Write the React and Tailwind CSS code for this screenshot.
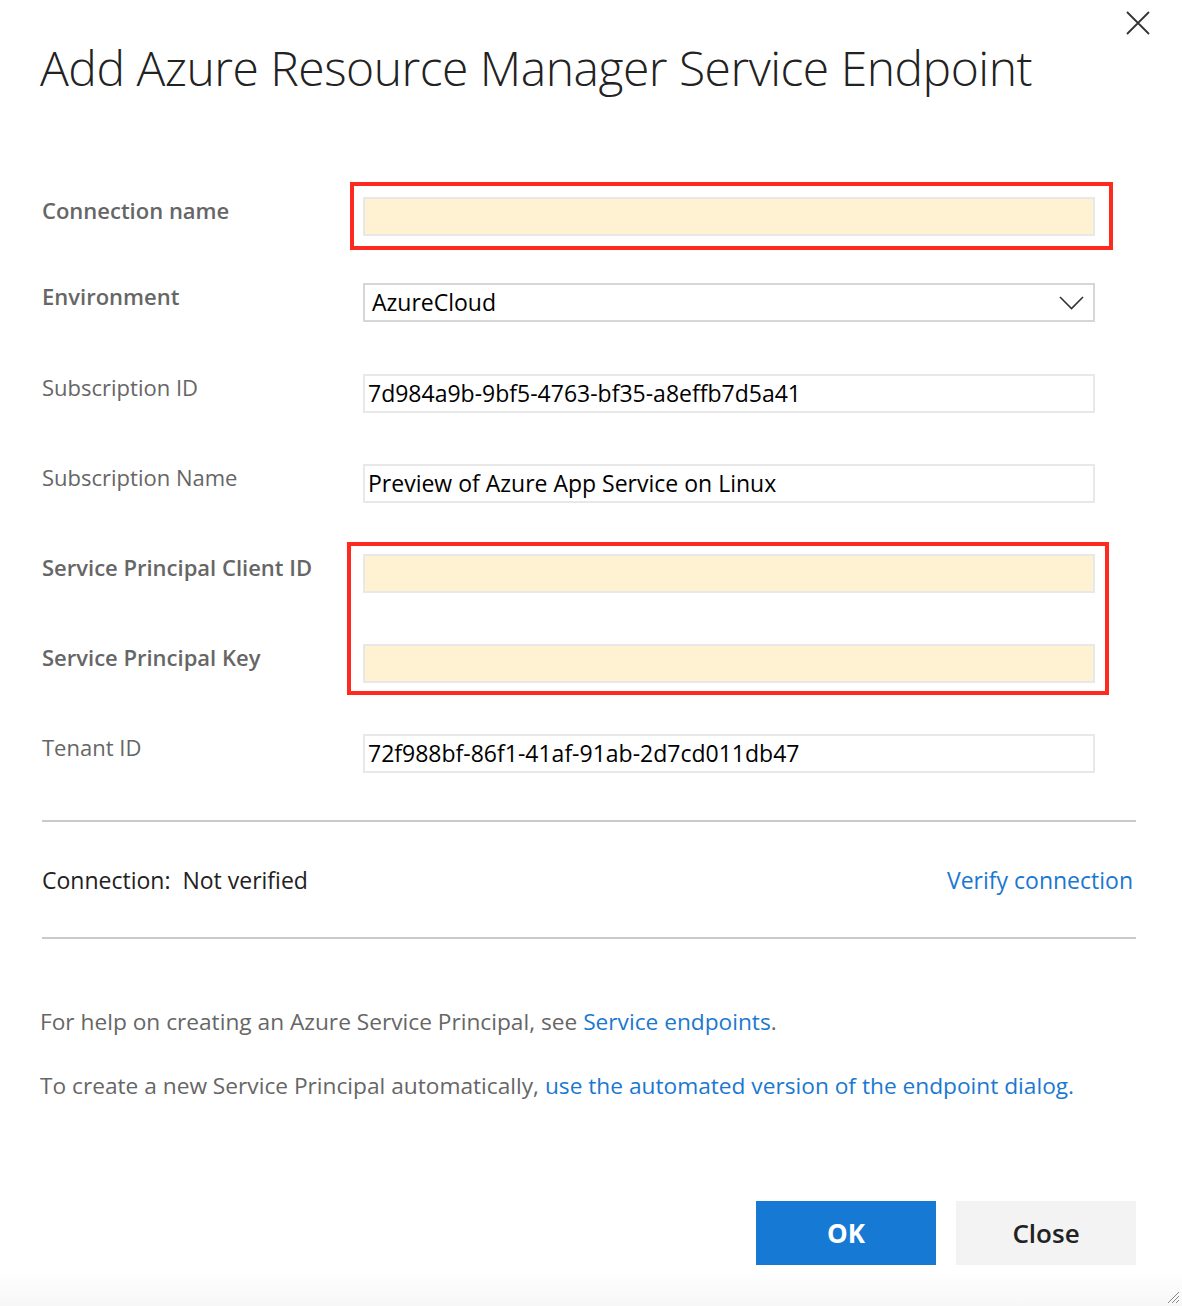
import React from 'react';

const font = { fontFamily: '"Open Sans", "Noto Sans", sans-serif' };

const fields = [
  { label: 'Connection name', bold: true, value: '', empty: true, mt: '' },
  { label: 'Environment', bold: true, value: 'AzureCloud', select: true, mt: 'mt-[47px]' },
  { label: 'Subscription ID', value: '7d984a9b-9bf5-4763-bf35-a8effb7d5a41', mt: 'mt-[52px]' },
  { label: 'Subscription Name', value: 'Preview of Azure App Service on Linux', mt: 'mt-[51px]' },
  { label: 'Service Principal Client ID', bold: true, value: '', empty: true, mt: 'mt-[51px]' },
  { label: 'Service Principal Key', bold: true, value: '', empty: true, mt: 'mt-[51px]' },
  { label: 'Tenant ID', value: '72f988bf-86f1-41af-91ab-2d7cd011db47', mt: 'mt-[51px]' },
];

const Field = ({ label, bold, value, empty, select, mt }) => (
  <div className={`flex items-start ${mt}`}>
    <div className={`w-[321px] text-[22px] leading-[26px] text-[#666] ${bold ? 'font-semibold' : ''}`}>{label}</div>
    <div
      className={`flex h-[39px] w-[732px] items-center justify-between border-2 px-[3px] text-[23px] text-black ${
        empty ? 'border-[#e8e8e8] bg-[#fef2d3]' : select ? 'border-[#d6d6d6] bg-white pl-[7px]' : 'border-[#e8e8e8] bg-white'
      }`}
    >
      <span>{value}</span>
      {select && (
        <svg className="mr-[6px]" width="25" height="14" viewBox="0 0 25 14">
          <polyline points="1,1 12.5,12.5 24,1" fill="none" stroke="#333" strokeWidth="1.6" />
        </svg>
      )}
    </div>
  </div>
);

export default function App() {
  return (
    <div className="relative h-[1306px] w-[1182px] overflow-hidden bg-white" style={font}>
      <button className="absolute right-[32px] top-[11px]">
        <svg width="24" height="24" viewBox="0 0 24 24">
          <path d="M1 1 L23 23 M23 1 L1 23" stroke="#333" strokeWidth="1.8" />
        </svg>
      </button>

      <div className="h-[100px] pl-[40px] pt-[36px]">
        <h1 className="text-[48px] font-light leading-[64px] tracking-[-0.5px] text-[#222]">
          Add Azure Resource Manager Service Endpoint
        </h1>
      </div>

      <div className="relative flex flex-col pl-[42px] pt-[97px]">
        {fields.map((f) => (
          <Field key={f.label} {...f} />
        ))}
        {/* annotation boxes */}
        <div className="pointer-events-none absolute left-[350px] top-[82px] h-[68px] w-[763px] border-4 border-[#ff2a1f]" />
        <div className="pointer-events-none absolute left-[347px] top-[442px] h-[153px] w-[762px] border-4 border-[#ff2a1f]" />
      </div>

      <div className="ml-[42px] mr-[46px] mt-[47px] border-t-2 border-[#cacaca]" />
      <div className="ml-[42px] mr-[49px] flex h-[115px] items-center justify-between pt-[2px] text-[23px] text-[#222]">
        <span>Connection:&nbsp; Not verified</span>
        <a className="text-[#1a78d0]">Verify connection</a>
      </div>
      <div className="ml-[42px] mr-[46px] border-t-2 border-[#cacaca]" />

      <div className="mt-[68px] pl-[40px] text-[22.7px] leading-[30px] text-[#666]">
        <p>
          For help on creating an Azure Service Principal, see{' '}
          <a className="text-[#1a78d0]">Service endpoints</a>.
        </p>
        <p className="mt-[34px]">
          To create a new Service Principal automatically,{' '}
          <a className="text-[#1a78d0]">use the automated version of the endpoint dialog.</a>
        </p>
      </div>

      <div className="mt-[100px] flex justify-end gap-[20px] pr-[46px]">
        <button className="h-[64px] w-[180px] bg-[#1679d3] text-[26px] font-bold text-white">OK</button>
        <button className="h-[64px] w-[180px] bg-[#f3f3f3] text-[26px] font-semibold text-[#222]">Close</button>
      </div>

      <div className="absolute bottom-0 left-0 h-[36px] w-full bg-gradient-to-b from-white to-[#f7f7f7]" />
      <svg className="absolute bottom-[2px] right-[2px]" width="14" height="14" viewBox="0 0 14 14">
        <path d="M13 2 L2 13 M13 6 L6 13 M13 10 L10 13" stroke="#888" strokeWidth="1" />
      </svg>
    </div>
  );
}
